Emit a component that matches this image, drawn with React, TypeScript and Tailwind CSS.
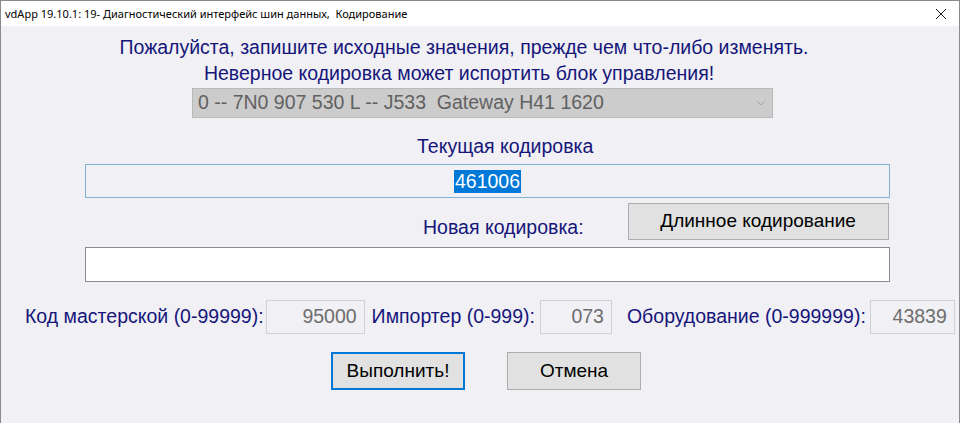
import { useState } from "react";

export default function App() {
  const [newCode, setNewCode] = useState<string>("");

  return (
    <div className="w-[960px] h-[423px] overflow-hidden border border-b-0 border-[#8a8a8a] bg-[#f0f0f5] font-['Liberation_Sans',Arial,sans-serif] text-[19.5px] text-[#16167a]">
      {/* title bar */}
      <div className="h-[25px] bg-white flex items-center justify-between pl-[4px] pr-[10px]">
        <span className="font-['Noto_Sans','Open_Sans',sans-serif] text-[11px] text-black leading-none">
          vdApp 19.10.1: 19- Диагностический интерфейс шин данных,&nbsp; Кодирование
        </span>
        <svg width="12" height="12" viewBox="0 0 12 12" className="mr-[2px]">
          <path d="M1 1L11 11M11 1L1 11" stroke="#222" strokeWidth="1" />
        </svg>
      </div>

      <div className="w-[926px] text-center leading-[21px] mt-[11px]">
        Пожалуйста, запишите исходные значения, прежде чем что-либо изменять.
      </div>
      <div className="w-[916px] text-center leading-[21px] mt-[5px]">
        Неверное кодировка может испортить блок управления!
      </div>

      {/* module select */}
      <div className="ml-[191px] mt-[4px] w-[581px] h-[30px] bg-[#cccccc] border border-[#b9b9b9] flex items-center justify-between pl-[5px] pr-[6px] text-[#616161]">
        <span className="leading-none">0 -- 7N0 907 530 L -- J533&nbsp; Gateway H41 1620</span>
        <svg width="10" height="6" viewBox="0 0 10 6">
          <path d="M1 1L5 5L9 1" fill="none" stroke="#a8a8a8" strokeWidth="1" />
        </svg>
      </div>

      <div className="ml-[416px] mt-[18px] leading-[21px]">Текущая кодировка</div>

      <div className="ml-[84px] mt-[7px] w-[805px] h-[34px] border border-[#7fb1d4] flex items-center justify-center">
        <span className="bg-[#0078d7] text-white leading-[23px] px-[1px]">461006</span>
      </div>

      {/* new coding row */}
      <div className="flex items-start mt-[5px]">
        <div className="ml-[422px] mt-[14px] leading-[21px] whitespace-nowrap">Новая кодировка:</div>
        <button className="ml-[44px] w-[261px] h-[37px] bg-[#e1e1e1] border border-[#adadad] text-black text-[19px]">
          Длинное кодирование
        </button>
      </div>

      <input
        value={newCode}
        onChange={(e) => setNewCode(e.target.value)}
        className="block ml-[84px] mt-[7px] w-[805px] h-[35px] bg-white border border-[#8c8c8c] outline-none px-2"
      />

      {/* workshop / importer / equipment */}
      <div className="flex items-center mt-[18px] h-[34px] whitespace-nowrap">
        <span className="ml-[24px] shrink-0 leading-none">Код мастерской (0-99999):</span>
        <div className="ml-[2px] shrink-0 w-[99px] h-[34px] border border-[#d2d2d2] flex items-center justify-end pr-[7px] text-[#6d6d6d]">
          95000
        </div>
        <span className="ml-[7px] shrink-0 leading-none">Импортер (0-999):</span>
        <div className="ml-[5px] shrink-0 w-[72px] h-[34px] border border-[#d2d2d2] flex items-center justify-end pr-[7px] text-[#6d6d6d]">
          073
        </div>
        <span className="ml-[15px] shrink-0 leading-none">Оборудование (0-999999):</span>
        <div className="ml-[4px] shrink-0 w-[85px] h-[34px] border border-[#d2d2d2] flex items-center justify-end pr-[7px] text-[#6d6d6d]">
          43839
        </div>
      </div>

      {/* buttons */}
      <div className="flex mt-[18px]">
        <button className="ml-[330px] w-[134px] h-[38px] bg-[#e1e1e1] border-2 border-[#0078d7] text-black text-[19px]">
          Выполнить!
        </button>
        <button className="ml-[42px] w-[134px] h-[38px] bg-[#e1e1e1] border border-[#adadad] text-black text-[19px]">
          Отмена
        </button>
      </div>
    </div>
  );
}
